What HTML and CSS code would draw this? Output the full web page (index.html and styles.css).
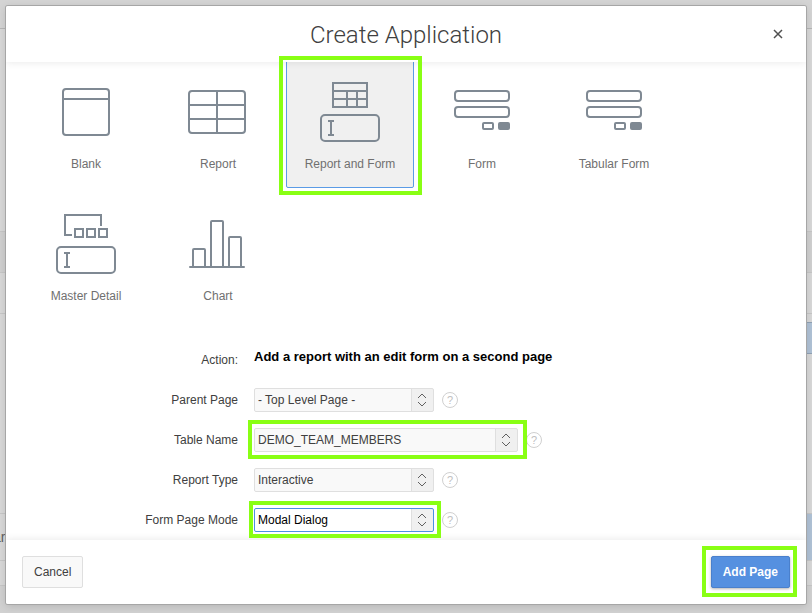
FILE: index.html
```
<!DOCTYPE html>
<html lang="en">
<head>
    <meta charset="UTF-8">
    <meta name="viewport" content="width=device-width, initial-scale=1.0">
    <title>Create Application</title>
    <link rel="stylesheet" href="styles.css">
</head>
<body>
    <!-- page under the dialog -->
    <div class="page" aria-hidden="true">
        <div class="page-top"></div>
        <div class="page-space"></div>
        <div class="page-band"></div>
        <div class="page-row"></div>
        <div class="page-main"><span class="page-button"></span></div>
        <div class="page-actions">ar<span class="page-next"></span></div>
        <div class="page-end"></div>
    </div>

    <div class="dialog" role="dialog" aria-labelledby="dialog-title">
        <header class="dialog-header">
            <h1 id="dialog-title">Create Application</h1>
            <button type="button" class="close" aria-label="Close">
                <svg width="10" height="10" viewBox="0 0 10 10"><path d="M1 1l8 8M9 1l-8 8"/></svg>
            </button>
        </header>

        <div class="dialog-body">
            <div class="tiles">
                <button type="button" class="tile">
                    <svg class="icon" width="64" height="64" viewBox="0 0 64 64">
                        <rect x="9" y="9" width="46" height="46" rx="3"/>
                        <path d="M9 19h46"/>
                    </svg>
                    <span>Blank</span>
                </button>
                <button type="button" class="tile">
                    <svg class="icon" width="64" height="64" viewBox="0 0 64 64">
                        <rect x="3" y="11" width="56" height="42" rx="3"/>
                        <path d="M3 25h56M3 39h56M31 11v42"/>
                    </svg>
                    <span>Report</span>
                </button>
                <button type="button" class="tile selected">
                    <svg class="icon" width="64" height="64" viewBox="0 0 64 64">
                        <path d="M15 3h34v24H15zM15 11h34M15 19h34M29 11v16M39 11v16"/>
                        <rect x="3" y="35" width="58" height="26" rx="4"/>
                        <path d="M10 41h6M10 55h6M13 41v14"/>
                    </svg>
                    <span>Report and Form</span>
                    <i class="mark mark-tile"></i>
                </button>
                <button type="button" class="tile">
                    <svg class="icon" width="64" height="64" viewBox="0 0 64 64">
                        <rect x="5" y="11" width="54" height="10" rx="3"/>
                        <rect x="5" y="27" width="54" height="10" rx="3"/>
                        <rect x="33" y="43" width="10" height="6" rx="1"/>
                        <rect class="solid" x="49" y="43" width="10" height="6" rx="1"/>
                    </svg>
                    <span>Form</span>
                </button>
                <button type="button" class="tile">
                    <svg class="icon" width="64" height="64" viewBox="0 0 64 64">
                        <rect x="5" y="11" width="54" height="10" rx="3"/>
                        <rect x="5" y="27" width="54" height="10" rx="3"/>
                        <rect x="33" y="43" width="10" height="6" rx="1"/>
                        <rect class="solid" x="49" y="43" width="10" height="6" rx="1"/>
                    </svg>
                    <span>Tabular Form</span>
                </button>
                <button type="button" class="tile">
                    <svg class="icon" width="64" height="64" viewBox="0 0 64 64">
                        <path d="M18 23h-7V3h36v11"/>
                        <path d="M21 17h8v8h-8zM33 17h8v8h-8zM45 17h8v8h-8z"/>
                        <rect x="3" y="35" width="58" height="26" rx="4"/>
                        <path d="M10 41h6M10 55h6M13 41v14"/>
                    </svg>
                    <span>Master Detail</span>
                </button>
                <button type="button" class="tile">
                    <svg class="icon" width="64" height="64" viewBox="0 0 64 64">
                        <path d="M7 55V38q0-1 1-1h10q1 0 1 1v17M25 55V10q0-1 1-1h10q1 0 1 1v45M43 55V26q0-1 1-1h10q1 0 1 1v29"/>
                        <path d="M4 55h54" stroke-linecap="round"/>
                    </svg>
                    <span>Chart</span>
                </button>
            </div>

            <form class="fields" id="page-form">
                <div class="field">
                    <span class="label">Action:</span>
                    <strong class="action">Add a report with an edit form on a second page</strong>
                </div>
                <div class="field">
                    <label class="label" for="parent">Parent Page</label>
                    <div class="control">
                        <span class="select">
                            <select id="parent"><option>- Top Level Page -</option></select>
                            <svg width="10" height="14" viewBox="0 0 10 14"><path d="M1 5l4-4 4 4M1 9l4 4 4-4"/></svg>
                        </span>
                        <button type="button" class="help" aria-label="Help: Parent Page">?</button>
                    </div>
                </div>
                <div class="field">
                    <label class="label" for="table">Table Name</label>
                    <div class="control">
                        <span class="select wide">
                            <select id="table"><option>DEMO_TEAM_MEMBERS</option></select>
                            <svg width="10" height="14" viewBox="0 0 10 14"><path d="M1 5l4-4 4 4M1 9l4 4 4-4"/></svg>
                            <i class="mark mark-table"></i>
                        </span>
                        <button type="button" class="help" aria-label="Help: Table Name">?</button>
                    </div>
                </div>
                <div class="field">
                    <label class="label" for="type">Report Type</label>
                    <div class="control">
                        <span class="select">
                            <select id="type"><option>Interactive</option></select>
                            <svg width="10" height="14" viewBox="0 0 10 14"><path d="M1 5l4-4 4 4M1 9l4 4 4-4"/></svg>
                        </span>
                        <button type="button" class="help" aria-label="Help: Report Type">?</button>
                    </div>
                </div>
                <div class="field">
                    <label class="label" for="mode">Form Page Mode</label>
                    <div class="control">
                        <span class="select current">
                            <select id="mode"><option>Modal Dialog</option></select>
                            <svg width="10" height="14" viewBox="0 0 10 14"><path d="M1 5l4-4 4 4M1 9l4 4 4-4"/></svg>
                            <i class="mark mark-mode"></i>
                        </span>
                        <button type="button" class="help" aria-label="Help: Form Page Mode">?</button>
                    </div>
                </div>
            </form>
        </div>

        <footer class="dialog-footer">
            <button type="button" class="button">Cancel</button>
            <button type="submit" form="page-form" class="button primary">Add Page<i class="mark mark-add"></i></button>
        </footer>
    </div>
</body>
</html>
```
FILE: styles.css
```
* {
    box-sizing: border-box;
}
body {
    position: relative;
    margin: 0;
    padding: 6px 6px 9px;
    min-height: 100vh;
    background: #cfcfcf;
    color: #404040;
    font-family: "Liberation Sans", Arial, sans-serif;
    font-size: 12px;
    line-height: 16px;
}
button, select {
    font: inherit;
    color: inherit;
}

/* dimmed page */
.page {
    position: absolute;
    top: 0;
    left: 0;
    width: 100%;
    height: 100%;
    overflow: hidden;
    background: #d1d1d1;
}
.page > div {
    background: #d8d8d8;
    border-bottom: 1px solid #c6c6c6;
}
.page .page-top {
    height: 29px;
    background: #d4d4d4;
    border-color: #b6b6b6;
}
.page-space {
    height: 203px;
}
.page .page-band {
    height: 41px;
    background: #d0d0d0;
}
.page-row {
    height: 41px;
}
.page-main {
    display: flex;
    justify-content: flex-end;
    height: 200px;
    padding-top: 8px;
}
.page-button {
    width: 40px;
    height: 32px;
    background: #b0c2d6;
    border: 1px solid #90a2b5;
    border-right: 0;
}
.page-actions {
    display: flex;
    align-items: center;
    justify-content: space-between;
    height: 47px;
    margin-left: -7px;
    color: #606060;
    font-size: 14px;
}
.page-next {
    align-self: stretch;
    width: 40px;
    background: #b0c2d6;
}
.page-end {
    height: 25px;
}

/* dialog */
.dialog {
    position: relative;
    overflow: hidden;
    background: #fff;
    border-radius: 2px;
    box-shadow: 0 0 0 1px #a6a6a6, 0 2px 8px rgba(0, 0, 0, 0.15);
}
.dialog-header {
    position: relative;
    z-index: 1;
    display: flex;
    align-items: center;
    height: 56px;
    padding: 0 16px;
    background: #fff;
    box-shadow: 0 0 8px rgba(0, 0, 0, 0.1);
}
.dialog-header h1 {
    flex: 1;
    margin: 0 0 0 24px;
    padding-top: 2px;
    color: #404040;
    font-family: Roboto, "Liberation Sans", sans-serif;
    font-size: 24px;
    font-weight: 300;
    line-height: 32px;
    text-align: center;
}
.close {
    display: flex;
    align-items: center;
    justify-content: center;
    width: 24px;
    height: 24px;
    padding: 0;
    background: none;
    border: 0;
}
.close svg {
    stroke: #505050;
    stroke-width: 1.5;
}

.tiles {
    display: grid;
    grid-template-columns: repeat(auto-fill, 128px);
    gap: 4px;
    margin-top: -2px;
    padding: 0 16px;
}
.tile {
    position: relative;
    display: flex;
    flex-direction: column;
    align-items: center;
    gap: 12px;
    height: 128px;
    padding: 19px 0 0;
    background: none;
    border: 1px solid transparent;
    border-radius: 2px;
    color: #707070;
}
.tile.selected {
    background: #f0f0f0;
    border-color: #5a9be6;
}
.icon {
    fill: none;
    stroke: #7f8993;
    stroke-width: 2;
}
.icon .solid {
    fill: #7f8993;
}

/* fields */
.fields {
    margin-top: 20px;
}
.field {
    display: grid;
    grid-template-columns: 232px 1fr;
    column-gap: 16px;
    align-items: center;
    height: 40px;
}
.label {
    text-align: right;
}
.action {
    padding-bottom: 6px;
    color: #000;
    font-size: 13px;
}
.control {
    display: flex;
    align-items: center;
    gap: 8px;
}
.select {
    position: relative;
    width: 180px;
    height: 24px;
}
.select.wide {
    width: 264px;
}
.select select {
    appearance: none;
    width: 100%;
    height: 24px;
    padding: 0 24px 0 3px;
    background: linear-gradient(to right, #dfdfdf 1px, #f0f0f0 1px) right / 22px 100% no-repeat #f9f9f9;
    border: 1px solid #dfdfdf;
    border-radius: 2px;
}
.select.current select {
    background-color: #fff;
    border-color: #4a90e2;
    color: #000;
}
.select svg {
    position: absolute;
    top: 5px;
    right: 7px;
    fill: none;
    stroke: #606060;
    pointer-events: none;
}
.help {
    width: 16px;
    height: 16px;
    padding: 0;
    background: none;
    border: 1px solid #d0d0d0;
    border-radius: 50%;
    color: #c0c0c0;
    font-size: 11px;
    line-height: 14px;
}

.dialog-footer {
    position: relative;
    display: flex;
    justify-content: space-between;
    align-items: center;
    height: 64px;
    padding: 0 16px;
    background: #fff;
    box-shadow: 0 0 8px rgba(0, 0, 0, 0.1);
}
.button {
    position: relative;
    height: 32px;
    padding: 0 11px;
    background: #f9f9f9;
    border: 1px solid #dfdfdf;
    border-radius: 2px;
}
.button.primary {
    background: #5590e0;
    border-color: #4a80cc;
    box-shadow: 0 1px 3px rgba(0, 0, 0, 0.3);
    color: #fff;
    font-weight: bold;
}

/* green frames over the steps to follow */
.mark {
    position: absolute;
    z-index: 2;
    border: 4px solid #89ff14;
    pointer-events: none;
}
.mark-tile {
    inset: -5px -9px -8px -8px;
}
.mark-table {
    inset: -8px -9px -7px -6px;
}
.mark-mode {
    inset: -7px -7px -6px -5px;
}
.mark-add {
    inset: -11px -8px -10px -10px;
}
```
